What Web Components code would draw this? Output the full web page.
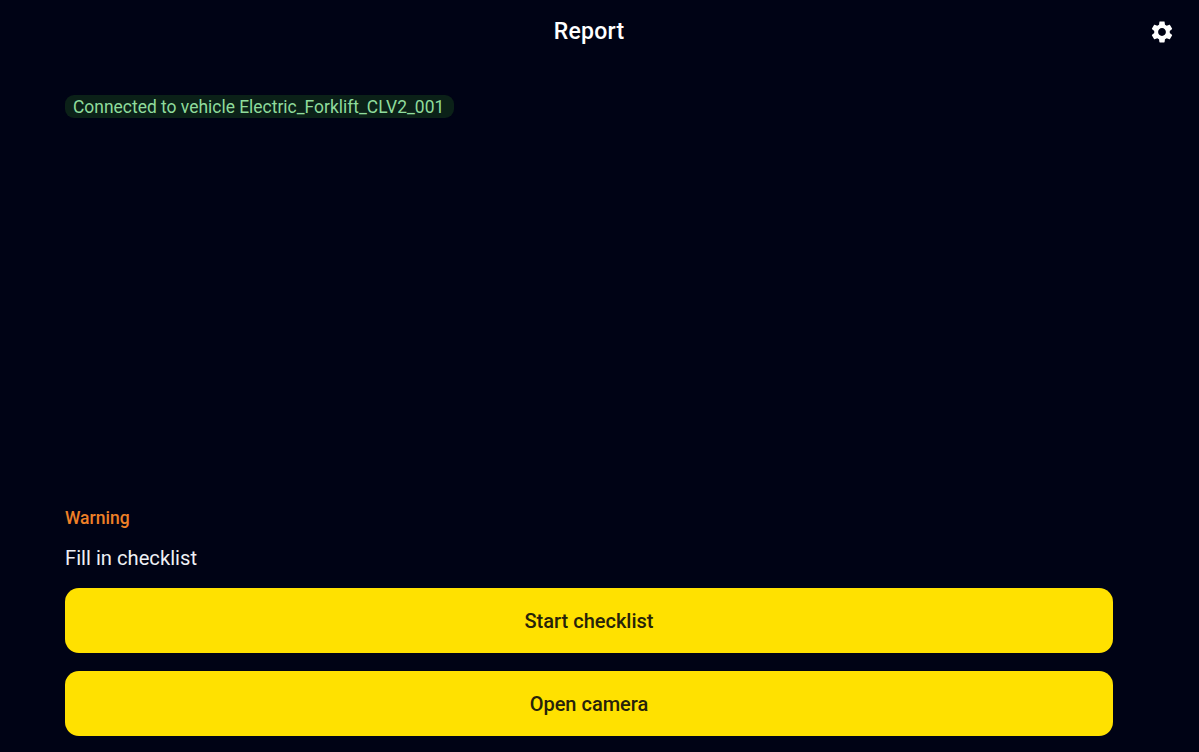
<!DOCTYPE html>
<html lang="en">
<head>
<meta charset="utf-8">
<title>Report</title>
<style>
  html, body { margin: 0; height: 100%; background: #000315; }
  body { font-family: Roboto, "Liberation Sans", sans-serif; }
</style>
</head>
<body>
<report-screen>
  <app-header slot="header" title="Report"></app-header>
  <status-pill slot="status">Connected to vehicle Electric_Forklift_CLV2_001</status-pill>
  <warning-note slot="footer" label="Warning">Fill in checklist</warning-note>
  <action-button slot="footer">Start checklist</action-button>
  <action-button slot="footer">Open camera</action-button>
</report-screen>

<script>
class ReportScreen extends HTMLElement {
  constructor() {
    super();
    this.attachShadow({ mode: 'open' });
    this.shadowRoot.innerHTML = `
      <style>
        :host {
          display: flex;
          flex-direction: column;
          height: 752px;
          box-sizing: border-box;
          padding-bottom: 16.5px;
          color: #fff;
        }
        .status {
          padding: 32px 86px 0 65px;
        }
        .footer {
          margin-top: auto;
          padding: 0 86px 0 65px;
          display: flex;
          flex-direction: column;
        }
      </style>
      <slot name="header"></slot>
      <div class="status"><slot name="status"></slot></div>
      <div class="footer"><slot name="footer"></slot></div>
    `;
  }
}

class AppHeader extends HTMLElement {
  constructor() {
    super();
    this.attachShadow({ mode: 'open' });
  }

  connectedCallback() {
    this.shadowRoot.innerHTML = `
      <style>
        :host {
          display: grid;
          grid-template-columns: 65px 1fr 86px;
          align-items: center;
          height: 63px;
        }
        h1 {
          grid-column: 2;
          margin: 0 0 1px;
          text-align: center;
          font-size: 23px;
          font-weight: 500;
          letter-spacing: .25px;
          color: #fff;
        }
        svg {
          grid-column: 3;
          justify-self: end;
          margin-right: 24px;
          width: 26px;
          height: 26px;
          fill: #fff;
        }
      </style>
      <h1>${this.getAttribute('title')}</h1>
      <svg viewBox="0 0 24 24" aria-label="Settings"><path d="M19.14 12.94c.04-.3.06-.61.06-.94 0-.32-.02-.64-.07-.94l2.03-1.58c.18-.14.23-.41.12-.61l-1.92-3.32c-.12-.22-.37-.29-.59-.22l-2.39.96c-.5-.38-1.03-.7-1.62-.94l-.36-2.54c-.04-.24-.24-.41-.48-.41h-3.84c-.24 0-.43.17-.47.41l-.36 2.54c-.59.24-1.13.57-1.62.94l-2.39-.96c-.22-.08-.47 0-.59.22L2.74 8.87c-.12.21-.08.47.12.61l2.03 1.58c-.05.3-.09.63-.09.94s.02.64.07.94l-2.03 1.58c-.18.14-.23.41-.12.61l1.92 3.32c.12.22.37.29.59.22l2.39-.96c.5.38 1.03.7 1.62.94l.36 2.54c.05.24.24.41.48.41h3.84c.24 0 .44-.17.47-.41l.36-2.54c.59-.24 1.13-.56 1.62-.94l2.39.96c.22.08.47 0 .59-.22l1.92-3.32c.12-.22.07-.47-.12-.61l-2.01-1.58zM12 15.6c-1.98 0-3.6-1.62-3.6-3.6s1.62-3.6 3.6-3.6 3.6 1.62 3.6 3.6-1.62 3.6-3.6 3.6z"/></svg>
    `;
  }
}

class StatusPill extends HTMLElement {
  constructor() {
    super();
    this.attachShadow({ mode: 'open' });
    this.shadowRoot.innerHTML = `
      <style>
        :host {
          display: inline-block;
          padding: 1px 10px 0 8px;
          height: 22px;
          line-height: 23px;
          border-radius: 9px;
          background: #0b2118;
          color: #8fdc9c;
          font-size: 17.44px;
          white-space: nowrap;
        }
      </style>
      <slot></slot>
    `;
  }
}

class WarningNote extends HTMLElement {
  constructor() {
    super();
    this.attachShadow({ mode: 'open' });
  }

  connectedCallback() {
    this.shadowRoot.innerHTML = `
      <style>
        :host { display: block; margin-bottom: 17px; }
        .label {
          color: #ee8027;
          font-size: 17.5px;
          font-weight: 500;
          line-height: 22px;
          margin-bottom: 16px;
        }
        .body {
          color: #eef0f4;
          font-size: 20.2px;
          line-height: 26px;
        }
      </style>
      <div class="label">${this.getAttribute('label')}</div>
      <div class="body"><slot></slot></div>
    `;
  }
}

class ActionButton extends HTMLElement {
  constructor() {
    super();
    this.attachShadow({ mode: 'open' });
    this.shadowRoot.innerHTML = `
      <style>
        :host {
          display: flex;
          align-items: center;
          justify-content: center;
          box-sizing: border-box;
          height: 65px;
          padding-top: 1px;
          border-radius: 14px;
          background: #ffe100;
          color: #27230a;
          font-size: 20px;
          font-weight: 500;
          cursor: pointer;
        }
        :host(:not(:last-child)) { margin-bottom: 18px; }
      </style>
      <slot></slot>
    `;
  }
}

customElements.define('report-screen', ReportScreen);
customElements.define('app-header', AppHeader);
customElements.define('status-pill', StatusPill);
customElements.define('warning-note', WarningNote);
customElements.define('action-button', ActionButton);
</script>
</body>
</html>
